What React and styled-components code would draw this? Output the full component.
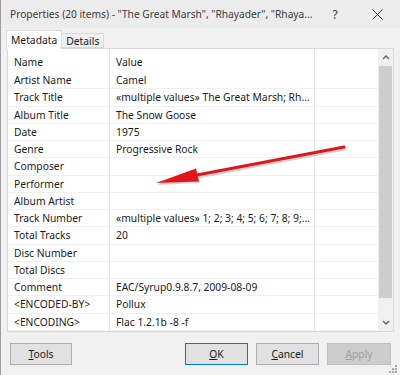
import React from 'react';
import styled, { createGlobalStyle } from 'styled-components';

const GlobalStyle = createGlobalStyle`
  html, body {
    margin: 0;
    padding: 0;
    background: #f0f0f0;
  }
  body {
    font-family: "Noto Sans", "Liberation Sans", sans-serif;
  }
`;

const Window = styled.div`
  position: relative;
  width: 400px;
  height: 375px;
  box-sizing: border-box;
  background: #f0f0f0;
  border-left: 1px solid #9d9d9d;
  display: flex;
  flex-direction: column;
  font-size: 10.3px;
  color: #1a1a1a;
  overflow: hidden;
`;

const TitleBar = styled.div`
  height: 28px;
  display: flex;
  align-items: center;
  padding-left: 9px;
  background: #ececec;
`;

const Title = styled.div`
  flex: 1;
  min-width: 0;
  font-size: 10.2px;
  color: #3a3a3a;
  white-space: nowrap;
`;

const TitleButton = styled.div`
  width: ${p => p.w}px;
  flex-shrink: 0;
  height: 28px;
  display: flex;
  align-items: center;
  justify-content: center;
  font-size: 12px;
  color: #3a3a3a;
`;

const TabRow = styled.div`
  display: flex;
  align-items: flex-end;
  height: 18px;
  margin-top: 2px;
  padding-left: 5px;
  position: relative;
  z-index: 1;
`;

const Tab = styled.div`
  box-sizing: border-box;
  height: ${p => (p.active ? 19 : 15)}px;
  margin-bottom: ${p => (p.active ? -1 : 0)}px;
  padding: 0 4px;
  display: flex;
  align-items: center;
  background: ${p => (p.active ? '#ffffff' : '#f0f0f0')};
  border: 1px solid #d9d9d9;
  border-bottom: ${p => (p.active ? 'none' : '1px solid #d9d9d9')};
  border-left: ${p => (p.first ? '1px solid #d9d9d9' : 'none')};
  color: #1a1a1a;
`;

const Panel = styled.div`
  box-sizing: border-box;
  margin-left: 6px;
  width: 387px;
  height: 284px;
  background: #ffffff;
  border: 1px solid #d9d9d9;
  display: flex;
`;

const List = styled.div`
  flex: 1;
  display: flex;
  flex-direction: column;
`;

const Row = styled.div`
  box-sizing: border-box;
  display: grid;
  grid-template-columns: 102px 205px 1fr;
  height: ${p => (p.header ? 23 : 17.25)}px;
  border-bottom: ${p => (p.header ? 'none' : '1px solid #f0f0f0')};
`;

const Cell = styled.div`
  box-sizing: border-box;
  padding-left: 6px;
  padding-top: ${p => (p.header ? 3 : 0)}px;
  display: flex;
  align-items: center;
  border-right: ${p => (p.last ? 'none' : '1px solid #e5e5e5')};
  white-space: nowrap;
  overflow: hidden;
`;

const ScrollBar = styled.div`
  width: 15px;
  background: #f0f0f0;
  display: flex;
  flex-direction: column;
`;

const ScrollArrow = styled.div`
  height: 17px;
  display: flex;
  align-items: center;
  justify-content: center;
`;

const Thumb = styled.div`
  height: 232px;
  margin: 0 1px;
  background: #cdcdcd;
`;

const Track = styled.div`
  flex: 1;
`;

const Footer = styled.div`
  display: flex;
  align-items: center;
  gap: 8px;
  margin-top: 11px;
  padding: 0 9px;
`;

const Spacer = styled.div`
  flex: 1;
`;

const Button = styled.div`
  box-sizing: border-box;
  width: ${p => p.w || 63}px;
  height: 22px;
  display: flex;
  align-items: center;
  justify-content: center;
  background: ${p => (p.disabled ? '#cccccc' : '#e1e1e1')};
  border: 1px solid ${p => (p.primary ? '#0078d7' : p.disabled ? '#bfbfbf' : '#adadad')};
  color: ${p => (p.disabled ? '#a0a0a0' : '#1a1a1a')};
  u {
    text-decoration: underline;
    text-underline-offset: 1px;
  }
`;

const Overlay = styled.svg`
  position: absolute;
  left: 0;
  top: 0;
  pointer-events: none;
`;

const Grip = styled.svg`
  position: absolute;
  right: 3px;
  bottom: 2px;
`;

const rows = [
  ['Artist Name', 'Camel'],
  ['Track Title', '\u00abmultiple values\u00bb The Great Marsh; Rh...'],
  ['Album Title', 'The Snow Goose'],
  ['Date', '1975'],
  ['Genre', 'Progressive Rock'],
  ['Composer', ''],
  ['Performer', ''],
  ['Album Artist', ''],
  ['Track Number', '\u00abmultiple values\u00bb 1; 2; 3; 4; 5; 6; 7; 8; 9;...'],
  ['Total Tracks', '20'],
  ['Disc Number', ''],
  ['Total Discs', ''],
  ['Comment', 'EAC/Syrup0.9.8.7, 2009-08-09'],
  ['<ENCODED-BY>', 'Pollux'],
  ['<ENCODING>', 'Flac 1.2.1b -8 -f'],
];

const Caret = ({ down }) => (
  <svg width="8" height="5" viewBox="0 0 8 5">
    <path
      d={down ? 'M1 1 L4 4 L7 1' : 'M1 4 L4 1 L7 4'}
      fill="none"
      stroke="#606060"
      strokeWidth="1.3"
    />
  </svg>
);

export default function App() {
  return (
    <>
      <GlobalStyle />
      <Window>
        <TitleBar>
          <Title>Properties (20 items) - "The Great Marsh", "Rhayader", "Rhaya...</Title>
          <TitleButton w={38}>?</TitleButton>
          <TitleButton w={46}>
            <svg width="11" height="11" viewBox="0 0 11 11">
              <path d="M0.5 0.5 L10.5 10.5 M10.5 0.5 L0.5 10.5" stroke="#3a3a3a" strokeWidth="1" />
            </svg>
          </TitleButton>
        </TitleBar>

        <TabRow>
          <Tab active first>Metadata</Tab>
          <Tab>Details</Tab>
        </TabRow>

        <Panel>
          <List>
            <Row header>
              <Cell header>Name</Cell>
              <Cell header>Value</Cell>
              <Cell header last />
            </Row>
            {rows.map(([name, value]) => (
              <Row key={name}>
                <Cell>{name}</Cell>
                <Cell>{value}</Cell>
                <Cell last />
              </Row>
            ))}
          </List>
          <ScrollBar>
            <ScrollArrow><Caret /></ScrollArrow>
            <Thumb />
            <Track />
            <ScrollArrow><Caret down /></ScrollArrow>
          </ScrollBar>
        </Panel>

        <Footer>
          <Button w={62}><span><u>T</u>ools</span></Button>
          <Spacer />
          <Button primary><span><u>O</u>K</span></Button>
          <Button><span><u>C</u>ancel</span></Button>
          <Button disabled w={64}><span><u>A</u>pply</span></Button>
        </Footer>

        <Overlay width="400" height="375" viewBox="0 0 400 375">
          <g transform="translate(1 2)" opacity="0.25">
            <path d="M343 147 L196 175" stroke="#555" strokeWidth="3" strokeLinecap="round" />
            <path d="M155 183 L195 169 L198 181 Z" fill="#555" />
          </g>
          <path d="M343 147 L196 175" stroke="#e0161b" strokeWidth="3" strokeLinecap="round" />
          <path d="M155 183 L195 168.5 L198 181.5 Z" fill="#e0161b" />
        </Overlay>

        <Grip width="8" height="8" viewBox="0 0 8 8">
          <rect x="6" y="0" width="2" height="2" fill="#a8a8a8" />
          <rect x="3" y="3" width="2" height="2" fill="#a8a8a8" />
          <rect x="6" y="3" width="2" height="2" fill="#a8a8a8" />
          <rect x="0" y="6" width="2" height="2" fill="#a8a8a8" />
          <rect x="3" y="6" width="2" height="2" fill="#a8a8a8" />
          <rect x="6" y="6" width="2" height="2" fill="#a8a8a8" />
        </Grip>
      </Window>
    </>
  );
}
